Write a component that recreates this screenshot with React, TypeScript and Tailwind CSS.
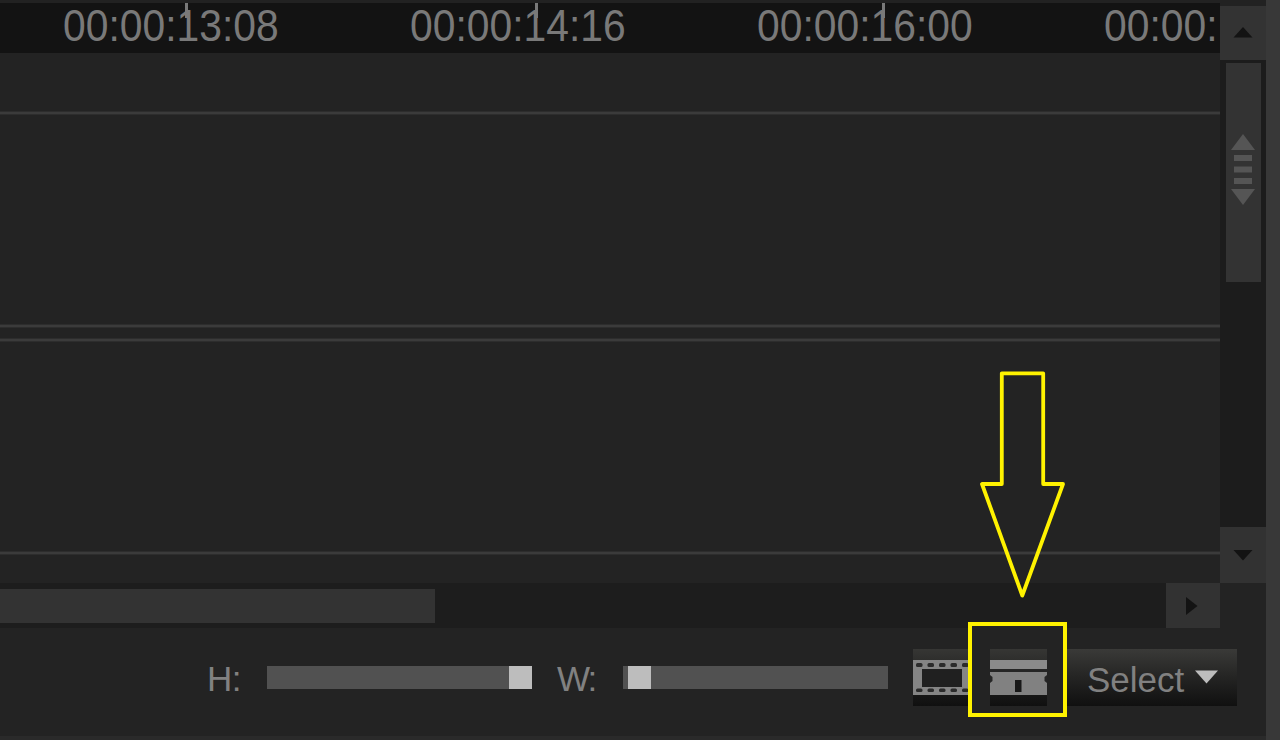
import type { ReactNode } from 'react'

// ─── Ruler ────────────────────────────────────────────────────────────────────

function Timecode({ children }: { children: ReactNode }) {
  return (
    <span className="inline-block origin-left scale-x-[0.907] whitespace-nowrap text-[45px] leading-[46px] text-[#797979]">
      {children}
    </span>
  )
}

function Ruler() {
  return (
    <div className="h-[50px] shrink-0 flex bg-[#131313] pl-[14px]">
      <div className="relative w-[347px] shrink-0 pl-[49px]">
        <Timecode>00:00:13:08</Timecode>
        <span className="absolute left-[171px] top-0 w-[3px] h-[15px] bg-[#797979]" />
      </div>
      <div className="relative w-[347px] shrink-0 pl-[49px]">
        <Timecode>00:00:14:16</Timecode>
        <span className="absolute left-[174px] top-0 w-[3px] h-[15px] bg-[#797979]" />
      </div>
      <div className="relative w-[347px] shrink-0 pl-[49px]">
        <Timecode>00:00:16:00</Timecode>
        <span className="absolute left-[174px] top-0 w-[3px] h-[15px] bg-[#797979]" />
      </div>
      <div className="pl-[49px]">
        <Timecode>00:00:</Timecode>
      </div>
    </div>
  )
}

// ─── Tracks ───────────────────────────────────────────────────────────────────

function Line() {
  return <div className="h-1 shrink-0 bg-[#3b3b3b] border-y border-[#2d2d2d]" />
}

function Tracks() {
  return (
    <div className="h-[530px] shrink-0 flex flex-col bg-[#232323]">
      <div className="h-[58px]" />
      <Line />
      <div className="h-[209px]" />
      <Line />
      <div className="h-2.5" />
      <Line />
      <div className="h-[209px]" />
      <Line />
    </div>
  )
}

// ─── Scrollbars ───────────────────────────────────────────────────────────────

function Triangle({ points }: { points: string }) {
  return (
    <svg width="20" height="20" viewBox="0 0 20 20" fill="#131313">
      <polygon points={points} />
    </svg>
  )
}

function HorizontalScrollbar() {
  return (
    <div className="h-[45px] shrink-0 flex items-center justify-between bg-[#1d1d1d]">
      <div className="w-[435px] h-[34px] bg-[#333]" />
      <button className="w-[54px] h-[45px] flex items-center justify-center bg-[#323232]">
        <Triangle points="3,1 14.5,10 3,19" />
      </button>
    </div>
  )
}

function VerticalScrollbar() {
  return (
    <div className="w-[46px] shrink-0 flex flex-col">
      <div className="h-1.5 bg-[#222]" />
      <div className="h-[577px] flex flex-col items-center bg-[#1c1c1c]">
        <button className="w-full h-[54px] shrink-0 flex items-center justify-center bg-[#333]">
          <Triangle points="0.5,14.5 10,4 19.5,14.5" />
        </button>
        <div className="mt-[3px] w-[35px] h-[219px] shrink-0 bg-[#333] flex justify-center pt-[71px]">
          <svg width="24" height="72" viewBox="0 0 24 72" fill="#555">
            <polygon points="12,0 24,16 0,16" />
            <rect x="3" y="21" width="18" height="6" />
            <rect x="3" y="32.5" width="18" height="6" />
            <rect x="3" y="44" width="18" height="6" />
            <polygon points="0,55 24,55 12,71" />
          </svg>
        </div>
        <button className="mt-auto w-full h-14 shrink-0 flex items-center justify-center bg-[#323232]">
          <Triangle points="0.5,5 19.5,5 10,15.5" />
        </button>
      </div>
    </div>
  )
}

// ─── Toolbar ──────────────────────────────────────────────────────────────────

function Slider({ children }: { children: ReactNode }) {
  return <div className="w-[265px] h-[23px] shrink-0 flex bg-[#515151]">{children}</div>
}

function SliderThumb() {
  return <div className="w-[23px] h-full bg-[#bdbdbd]" />
}

function FilmIcon() {
  return (
    <svg width="57" height="35" viewBox="0 0 57 35">
      <rect width="57" height="35" fill="#858585" />
      <rect x="9" y="9" width="40" height="18" fill="#202020" />
      {[3, 14.5, 26, 37.5, 49].map(x => (
        <g key={x} fill="#2b2b2b">
          <rect x={x} y="3" width="6.5" height="4" rx="1.5" />
          <rect x={x} y="28.5" width="6.5" height="3.5" rx="1.5" />
        </g>
      ))}
    </svg>
  )
}

function StoryboardIcon() {
  return (
    <svg width="57" height="35" viewBox="0 0 57 35">
      <rect width="57" height="35" fill="#252525" />
      <rect width="57" height="9" fill="#8a8a8a" />
      <path d="M0 12H57V15L54.5 17V21L57 23V35H0V23L2.5 21V17L0 15Z" fill="#818181" />
      <rect x="25" y="20" width="6.5" height="12" fill="#181818" />
    </svg>
  )
}

function Toolbar() {
  return (
    <div className="h-[108px] w-[1266px] flex items-start bg-[#232323] text-[35px] leading-10 text-[#818181]">
      <span className="w-[60px] ml-[207px] mt-[31px] shrink-0 tracking-[-0.5px]">H:</span>
      <div className="mt-[38px]">
        <Slider>
          <div className="flex-1" />
          <SliderThumb />
        </Slider>
      </div>
      <span className="w-[66px] ml-[25px] mt-[31px] shrink-0 tracking-[-2px]">W:</span>
      <div className="mt-[38px]">
        <Slider>
          <div className="w-[5px]" />
          <SliderThumb />
        </Slider>
      </div>
      <button className="ml-[25px] mt-[21px] w-[57px] h-[57px] shrink-0 flex items-center bg-linear-to-b from-[#363634] to-[#101010]">
        <FilmIcon />
      </button>
      <div className="relative -ml-0.5 -mt-1.5 w-[99px] h-[95px] shrink-0 border-4 border-[#fff200] bg-[#232323] flex items-start pl-[18px] pt-[23px]">
        <button className="w-[57px] h-[57px] shrink-0 flex items-center bg-linear-to-b from-[#363634] to-[#101010]">
          <StoryboardIcon />
        </button>
      </div>
      <button className="mt-[21px] w-[170px] h-[57px] shrink-0 flex items-center pl-5 pt-1 bg-linear-to-b from-[#3a3a38] to-[#101010]">
        <span className="w-[108px] text-left">Select</span>
        <svg className="mb-1.5" width="23" height="14" viewBox="0 0 23 14" fill="#bdbdbd">
          <polygon points="0,0.5 23,0.5 11.5,13.5" />
        </svg>
      </button>
    </div>
  )
}

// ─── Main ─────────────────────────────────────────────────────────────────────

export default function App() {
  return (
    <div className="relative w-[1280px] h-[740px] overflow-hidden flex bg-[#383838] font-['Liberation_Sans',Arial,sans-serif]">
      <div className="w-[1266px] flex flex-col bg-[#2a2a2a]">
        <div className="h-[628px] shrink-0 flex bg-[#232323]">
          <div className="w-[1220px] shrink-0 flex flex-col">
            <div className="h-[3px] shrink-0 bg-[#222]" />
            <Ruler />
            <Tracks />
            <HorizontalScrollbar />
          </div>
          <VerticalScrollbar />
        </div>
        <Toolbar />
      </div>

      {/* arrow pointing at the storyboard button */}
      <svg
        className="absolute left-[976px] top-[366px]"
        width="94"
        height="238"
        viewBox="0 0 94 238"
        fill="none"
        stroke="#fff200"
        strokeWidth="3.8"
      >
        <path d="M25.8 7.3H67.2V118H87L46.3 229.5L6 118H25.8Z" strokeLinejoin="round" />
      </svg>
    </div>
  )
}
